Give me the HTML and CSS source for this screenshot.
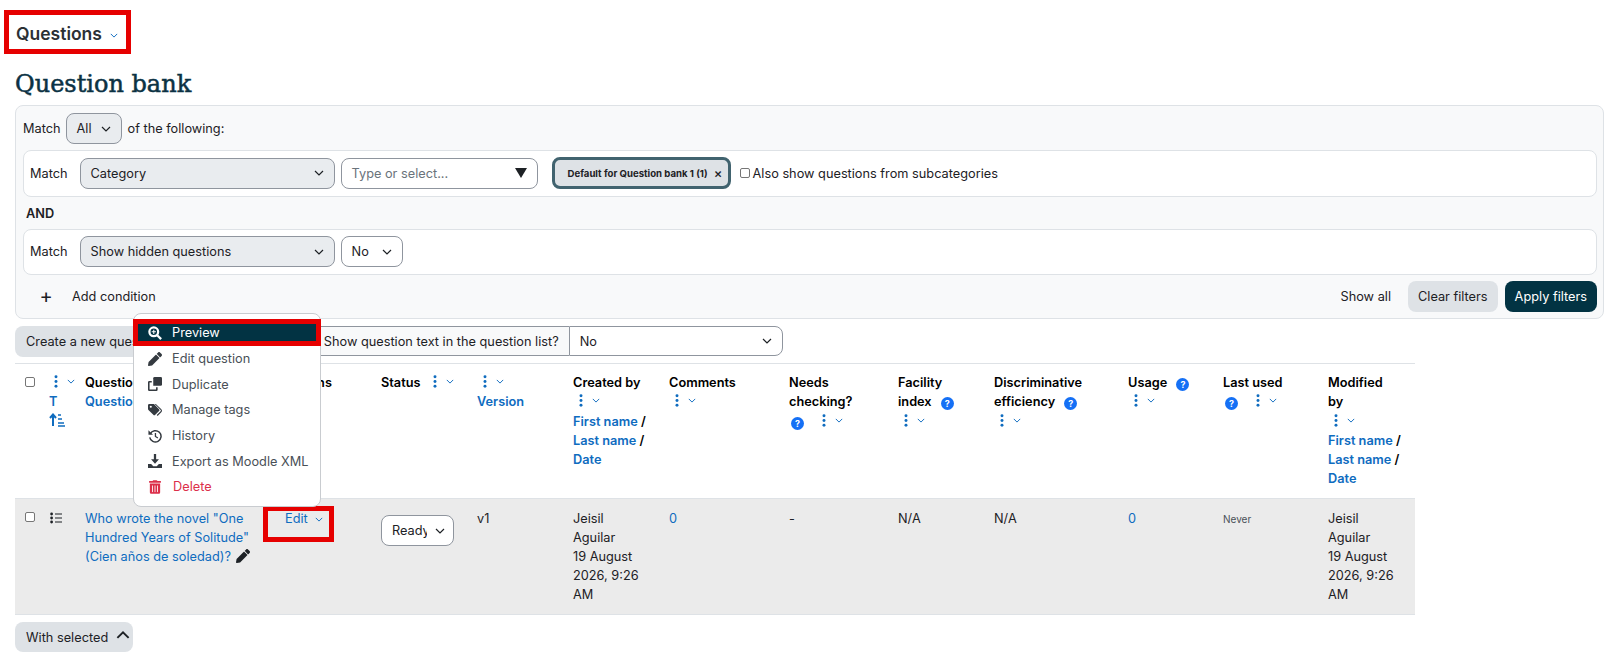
FILE: index.html
```html
<!DOCTYPE html>
<html lang="en">
<head>
<meta charset="utf-8">
<title>Question bank</title>
<link rel="stylesheet" href="styles.css">
</head>
<body>
<svg class="defs" width="0" height="0" aria-hidden="true">
  <symbol id="chev" viewBox="0 0 10 6"><path d="M1 1l4 4 4-4" fill="none" stroke="currentColor" stroke-width="1.2"/></symbol>
  <symbol id="dots" viewBox="0 0 4 14"><circle cx="2" cy="2" r="1.6"/><circle cx="2" cy="7" r="1.6"/><circle cx="2" cy="12" r="1.6"/></symbol>
  <symbol id="pencil" viewBox="0 0 512 512"><path d="M497.9 142.1l-46.1 46.1c-4.7 4.7-12.3 4.7-17 0l-111-111c-4.7-4.7-4.7-12.3 0-17l46.1-46.1c18.7-18.7 49.1-18.7 67.9 0l60.1 60.1c18.8 18.7 18.8 49.1 0 67.9zM284.2 99.8L21.6 362.4.4 483.9c-2.9 16.4 11.4 30.6 27.8 27.8l121.5-21.3 262.6-262.6c4.7-4.7 4.7-12.3 0-17l-111-111c-4.8-4.7-12.4-4.7-17.1 0z"/></symbol>
  <symbol id="trash" viewBox="0 0 448 512"><path d="M32 464a48 48 0 0 0 48 48h288a48 48 0 0 0 48-48V128H32zm272-256a16 16 0 0 1 32 0v224a16 16 0 0 1-32 0zm-96 0a16 16 0 0 1 32 0v224a16 16 0 0 1-32 0zm-96 0a16 16 0 0 1 32 0v224a16 16 0 0 1-32 0zM432 32H312l-9.4-18.7A24 24 0 0 0 281.1 0H166.8a23.72 23.72 0 0 0-21.4 13.3L136 32H16A16 16 0 0 0 0 48v32a16 16 0 0 0 16 16h416a16 16 0 0 0 16-16V48a16 16 0 0 0-16-16z"/></symbol>
</svg>

<main class="page">
  <div class="tertiary">
    <div class="tertiary-box"><span class="tertiary-title">Questions</span><svg class="chev-sm tertiary-chev"><use href="#chev"/></svg></div>
  </div>
  <h1 class="title">Question bank</h1>

  <section class="filters">
    <div class="match-line">
      <span>Match</span>
      <div class="select grey all-select"><span>All</span><svg class="chev"><use href="#chev"/></svg></div>
      <span class="match-tail">of the following:</span>
    </div>
    <div class="cond">
      <span>Match</span>
      <div class="select grey type-select"><span>Category</span><svg class="chev"><use href="#chev"/></svg></div>
      <div class="select value-select"><span class="placeholder">Type or select...</span><span class="solid-caret"></span></div>
      <div class="chip"><span>Default for Question bank 1 (1)</span><span class="chip-x">×</span></div>
      <label class="check-label"><span class="check"></span>Also show questions from subcategories</label>
    </div>
    <div class="and">AND</div>
    <div class="cond">
      <span>Match</span>
      <div class="select grey type-select"><span>Show hidden questions</span><svg class="chev"><use href="#chev"/></svg></div>
      <div class="select no-select"><span>No</span><svg class="chev"><use href="#chev"/></svg></div>
    </div>
    <div class="filter-foot">
      <span class="plus">+</span>
      <span class="add">Add condition</span>
      <span class="show-all">Show all</span>
      <button class="btn">Clear filters</button>
      <button class="btn dark">Apply filters</button>
    </div>
  </section>

  <div class="toolbar">
    <button class="btn create">Create a new question ...</button>
    <div class="text-toggle">
      <span class="toggle-label">Show question text in the question list?</span>
      <div class="select toggle-select"><span>No</span><svg class="chev"><use href="#chev"/></svg></div>
    </div>
  </div>

  <table class="qtable">
    <colgroup>
      <col class="c1"><col class="c2"><col class="c3"><col class="c4"><col class="c5"><col class="c6"><col class="c7">
      <col class="c8"><col class="c9"><col class="c10"><col class="c11"><col class="c12"><col class="c13"><col class="c14">
    </colgroup>
    <thead>
      <tr>
        <th><span class="check"></span></th>
        <th class="tight">
          <span class="tools first-tools"><svg class="dots"><use href="#dots"/></svg><svg class="chev-sm"><use href="#chev"/></svg></span><br>
          <a>T</a><br>
          <svg class="sort" viewBox="0 0 16 14"><path d="M4 13V2M1 5l3-3.5L7 5" fill="none" stroke="currentColor" stroke-width="2"/><path d="M9 2h3M9 6h4M9 10h6M9 13h7" fill="none" stroke="currentColor" stroke-width="1.6"/></svg>
        </th>
        <th>Question<br><a>Question name</a></th>
        <th class="actions-head">Actions</th>
        <th>Status <span class="tools"><svg class="dots"><use href="#dots"/></svg><svg class="chev-sm"><use href="#chev"/></svg></span></th>
        <th><span class="tools no-gap"><svg class="dots"><use href="#dots"/></svg><svg class="chev-sm"><use href="#chev"/></svg></span><br><a>Version</a></th>
        <th>Created by<br><span class="tools no-gap"><svg class="dots"><use href="#dots"/></svg><svg class="chev-sm"><use href="#chev"/></svg></span><br><a>First name</a> /<br><a>Last name</a> /<br><a>Date</a></th>
        <th>Comments<br><span class="tools no-gap"><svg class="dots"><use href="#dots"/></svg><svg class="chev-sm"><use href="#chev"/></svg></span></th>
        <th>Needs<br>checking?<br><span class="help">?</span><span class="tools"><svg class="dots"><use href="#dots"/></svg><svg class="chev-sm"><use href="#chev"/></svg></span></th>
        <th>Facility<br>index <span class="help after-text">?</span><br><span class="tools no-gap"><svg class="dots"><use href="#dots"/></svg><svg class="chev-sm"><use href="#chev"/></svg></span></th>
        <th>Discriminative<br>efficiency <span class="help after-text">?</span><br><span class="tools no-gap"><svg class="dots"><use href="#dots"/></svg><svg class="chev-sm"><use href="#chev"/></svg></span></th>
        <th>Usage <span class="help after-text">?</span><br><span class="tools no-gap"><svg class="dots"><use href="#dots"/></svg><svg class="chev-sm"><use href="#chev"/></svg></span></th>
        <th>Last used<br><span class="help">?</span><span class="tools"><svg class="dots"><use href="#dots"/></svg><svg class="chev-sm"><use href="#chev"/></svg></span></th>
        <th>Modified<br>by<br><span class="tools no-gap"><svg class="dots"><use href="#dots"/></svg><svg class="chev-sm"><use href="#chev"/></svg></span><br><a>First name</a> /<br><a>Last name</a> /<br><a>Date</a></th>
      </tr>
    </thead>
    <tbody>
      <tr>
        <td><span class="check"></span></td>
        <td class="tight"><svg class="list-icon" viewBox="0 0 12 12"><circle cx="1.6" cy="2" r="1.4"/><circle cx="1.6" cy="6" r="1.4"/><circle cx="1.6" cy="10" r="1.4"/><path d="M5 1.4h7v1.2H5zM5 5.4h7v1.2H5zM5 9.4h7v1.2H5z"/></svg></td>
        <td><a>Who wrote the novel "One Hundred Years of Solitude" (Cien años de soledad)?</a> <svg class="inline-pencil"><use href="#pencil"/></svg></td>
        <td class="edit-cell"><a>Edit</a><svg class="chev-sm edit-chev"><use href="#chev"/></svg><span class="mark edit-mark"></span></td>
        <td><div class="select status-select"><span class="status-text">Ready</span><svg class="chev"><use href="#chev"/></svg></div></td>
        <td>v1</td>
        <td>Jeisil<br>Aguilar<br>19 August<br>2026, 9:26<br>AM</td>
        <td><a>0</a></td>
        <td>-</td>
        <td>N/A</td>
        <td>N/A</td>
        <td><a>0</a></td>
        <td><small class="never">Never</small></td>
        <td>Jeisil<br>Aguilar<br>19 August<br>2026, 9:26<br>AM</td>
      </tr>
    </tbody>
  </table>

  <button class="btn with-selected">With selected<svg class="up" viewBox="0 0 12 8"><path d="M1 7l5-5 5 5" fill="none" stroke="currentColor" stroke-width="1.7"/></svg></button>

  <nav class="menu">
    <a class="menu-item active"><svg class="mi" viewBox="0 0 16 16"><circle cx="6.6" cy="6.6" r="5" fill="none" stroke="currentColor" stroke-width="2.6"/><path d="M10.5 10.5L15 15" stroke="currentColor" stroke-width="2.6"/><path d="M4.2 6.6h4.8M6.6 4.2V9" stroke="currentColor" stroke-width="1.2"/></svg>Preview</a>
    <a class="menu-item"><svg class="mi"><use href="#pencil"/></svg>Edit question</a>
    <a class="menu-item"><svg class="mi" viewBox="0 0 16 16"><path d="M6 1.5A1.5 1.5 0 0 1 7.500 0h7A1.500 1.500 0 0 1 16 1.500v7a1.500 1.500 0 0 1-1.500 1.500H6z"/><path d="M4.300 4.500H1.500A1.500 1.500 0 0 0 0 6v8.500A1.500 1.500 0 0 0 1.500 16h8a1.500 1.500 0 0 0 1.500-1.500v-2.800H9.200v2.500H1.800V6.300h2.500z"/></svg>Duplicate</a>
    <a class="menu-item"><svg class="mi" viewBox="0 0 16 14"><path d="M0 1.500A1.500 1.500 0 0 1 1.500 0h4.400c.5 0 .9.200 1.200.5l5.500 5.500a1.500 1.500 0 0 1 0 2.200l-4.300 4.300a1.500 1.500 0 0 1-2.200 0L.5 7.100A1.700 1.700 0 0 1 0 5.900zM3.200 2a1.200 1.200 0 1 0 0 2.400 1.200 1.200 0 0 0 0-2.400z"/><path d="M9 0l6.200 6.200a2.500 2.500 0 0 1 0 3.400L11 13.800l-1-1 4.400-4.500a1 1 0 0 0 0-1.400L7.700 0z"/></svg>Manage tags</a>
    <a class="menu-item"><svg class="mi" viewBox="0 0 16 16"><path d="M2.600 5.500A6.500 6.500 0 1 1 2 9.500" fill="none" stroke="currentColor" stroke-width="1.700"/><path d="M0.500 1.500v5.200h5.200z"/><path d="M8.500 4.500V8.500l2.800 1.800" fill="none" stroke="currentColor" stroke-width="1.500"/></svg>History</a>
    <a class="menu-item"><svg class="mi" viewBox="0 0 16 16"><path d="M6.700 0h2.600v6H12.500L8 11 3.500 6h3.200z"/><path d="M0 11.500h3.600L6 14h4l2.400-2.500H16V16H0z"/></svg>Export as Moodle XML</a>
    <a class="menu-item danger"><svg class="mi trash-mi"><use href="#trash"/></svg>Delete</a>
  </nav>
</main>
</body>
</html>
```

FILE: styles.css
```css
* { box-sizing: border-box; }
html, body { margin: 0; padding: 0; }
body {
  font-family: Inter, "Liberation Sans", sans-serif;
  font-size: 12.75px;
  line-height: 19px;
  color: #1d2125;
  background: #fff;
}
.defs { position: absolute; }
a { color: #0f6cbf; }
svg { fill: currentColor; }

.page { position: relative; padding: 10px 12px 0 15px; height: 662px; overflow: hidden; }

.tertiary { margin-left: -11px; }
.tertiary-box {
  display: inline-flex;
  align-items: center;
  width: 127px;
  height: 44px;
  border: 5px solid #e60000;
  padding: 3px 0 0 7px;
}
.tertiary-title { font-size: 17.5px; font-weight: 600; color: #2b3035; }
.tertiary-chev { margin-left: 8px; margin-top: 3px; color: #495057; }

.title {
  margin: 14px 0 4px;
  font-family: "DejaVu Serif", "Liberation Serif", serif;
  font-weight: 400;
  -webkit-text-stroke: 0.5px #0b3244;
  font-size: 24px;
  line-height: 33px;
  color: #0b3244;
}

.filters {
  height: 214px;
  padding: 7px 6px 7px 7px;
  background: #f8f9fa;
  border: 1px solid #dee2e6;
  border-radius: 8px;
}
.match-line { display: flex; align-items: center; gap: 5px; height: 31px; }
.match-tail { margin-left: 1px; }
.cond {
  display: flex;
  align-items: center;
  gap: 6px;
  height: 46.5px;
  margin-top: 6px;
  padding: 0 6px;
  background: #fff;
  border: 1px solid #dee2e6;
  border-radius: 8px;
}
.cond > span:first-child { margin-right: 6px; }
.and { font-weight: 600; margin: 7px 0 5px 3px; line-height: 19px; }

.select {
  display: flex;
  align-items: center;
  justify-content: space-between;
  height: 31px;
  padding: 0 10px;
  border: 1px solid #8f959e;
  border-radius: 8px;
  background: #fff;
  flex: none;
}
.select.grey { background: #e9ecef; }
.chev { width: 10px; height: 6px; color: #1d2125; flex: none; }
.chev-sm { width: 8px; height: 5px; color: #0f6cbf; }
.all-select { width: 56px; }
.type-select { width: 255px; }
.value-select { width: 197px; }
.placeholder { color: #6a737b; }
.solid-caret {
  width: 0;
  height: 0;
  border-left: 6px solid transparent;
  border-right: 6px solid transparent;
  border-top: 10px solid #1d2125;
}
.no-select { width: 62px; }
.chip {
  display: flex;
  align-items: center;
  justify-content: space-between;
  width: 179px;
  height: 32px;
  margin-left: 8px;
  padding: 0 5px 0 13px;
  background: #dee2e6;
  border: 3px solid #41636f;
  border-radius: 8px;
  font-size: 9.6px;
  font-weight: 700;
}
.chip-x { font-size: 13px; font-weight: 500; }
.check {
  display: inline-block;
  width: 10px;
  height: 10px;
  background: #fff;
  border: 1px solid #767676;
  border-radius: 2px;
}
.check-label { display: inline-flex; align-items: center; gap: 3px; margin-left: 3px; }

.filter-foot { display: flex; align-items: center; height: 31px; margin-top: 6px; }
.plus { font-size: 20px; width: 22px; margin-left: 12px; text-align: center; margin-right: 15px; }
.show-all { margin-left: auto; margin-right: 17px; }

.btn {
  font: inherit;
  height: 31px;
  padding: 0 10px;
  border: 0;
  border-radius: 8px;
  background: #dee2e6;
  color: #1d2125;
}
.btn.dark { background: #023343; color: #fff; margin-left: 7px; }
.btn.create { padding-left: 11px; }

.toolbar { display: flex; align-items: center; margin-top: 7px; height: 30px; }
.text-toggle { display: flex; margin-left: 127px; }
.toggle-label {
  display: flex;
  align-items: center;
  height: 30px;
  padding: 0 10px;
  background: #f8f9fa;
  border: 1px solid #8f959e;
  border-right: 0;
  white-space: nowrap;
}
.toggle-select { width: 214px; height: 30px; border-radius: 0 8px 8px 0; }

.qtable {
  table-layout: fixed;
  border-collapse: collapse;
  width: 1400px;
  margin-top: 7px;
}
.c1 { width: 24px; } .c2 { width: 36px; } .c3 { width: 200px; } .c4 { width: 96px; }
.c5 { width: 96px; } .c6 { width: 96px; } .c7 { width: 96px; } .c8 { width: 120px; }
.c9 { width: 109px; } .c10 { width: 96px; } .c11 { width: 134px; } .c12 { width: 95px; }
.c13 { width: 105px; } .c14 { width: 97px; }
.qtable th, .qtable td {
  padding: 9px 10px;
  vertical-align: top;
  text-align: left;
}
.qtable td { padding-top: 10px; }
.qtable th {
  height: 135px;
  border-top: 1px solid #dee2e6;
  border-bottom: 1px solid #dee2e6;
  font-weight: 600;
  line-height: 19.3px;
  color: #000;
}
.qtable th a { font-weight: 600; }
.qtable td { height: 116px; background: #ebebeb; border-bottom: 1px solid #dee2e6; }
.qtable th:first-child, .qtable td:first-child { padding-right: 0; }
.qtable td:first-child { padding-top: 9px; }
.qtable .tight { padding-right: 0; }
.actions-head { overflow: hidden; }

.tools { display: inline-flex; align-items: center; gap: 9px; margin-left: 9px; vertical-align: -1px; }
.tools.no-gap { margin-left: 6px; }
.first-tools { margin-left: 5px; }
.help + .tools { margin-left: 18px; }
.dots { width: 4px; height: 13px; color: #0f6cbf; }
.help {
  display: inline-flex;
  align-items: center;
  justify-content: center;
  width: 13px;
  height: 13px;
  border-radius: 50%;
  background: #1570f5;
  color: #fff;
  font-size: 9px;
  font-weight: 700;
  line-height: 1;
  margin-left: 2px;
  vertical-align: -1px;
}
.help.after-text { margin-left: 6px; }
.sort { width: 16px; height: 14px; color: #0f6cbf; vertical-align: -1px; }
.list-icon { width: 12px; height: 12px; margin-left: 1px; color: #1d2125; vertical-align: -1px; }
.inline-pencil { width: 14px; height: 14px; vertical-align: -2px; margin-left: 1px; color: #1d2125; }
.edit-cell { position: relative; }
.edit-chev { margin-left: 7px; vertical-align: 1px; }
.mark {
  position: absolute;
  border: 5px solid #e60000;
  pointer-events: none;
}
.edit-mark { left: -12px; top: 7px; width: 71px; height: 36px; }
.status-select { margin-top: 6px; width: 73px; padding: 0 8px 0 10px; }
.status-text { display: block; width: 35px; overflow: hidden; }
.never { font-size: 10px; color: #495057; }

.with-selected {
  display: flex;
  align-items: center;
  gap: 8px;
  margin-top: 7px;
  padding: 0 3px 0 11px;
  height: 30px;
}
.up { width: 14px; height: 9px; color: #1d2125; margin-top: -6px; }

.menu {
  position: absolute;
  left: 133px;
  top: 313px;
  width: 188px;
  height: 194px;
  padding-top: 5px;
  background: #fff;
  border: 1px solid #c9ccd0;
  border-radius: 8px;
}
.menu-item {
  display: flex;
  align-items: center;
  gap: 10px;
  height: 25.6px;
  padding-left: 14px;
  color: #495057;
}
.menu-item.active {
  height: 27px;
  margin: 0 -1px;
  padding-left: 10px;
  background: #023343;
  border: 5px solid #e60000;
  color: #fff;
}
.menu-item.danger { color: #dc2f4a; }
.mi { width: 14px; height: 14px; flex: none; color: #343a40; }
.active .mi { color: #fff; }
.danger .mi { color: #dc2f4a; }
.trash-mi { width: 12px; margin: 0 2px 0 1px; }
```
